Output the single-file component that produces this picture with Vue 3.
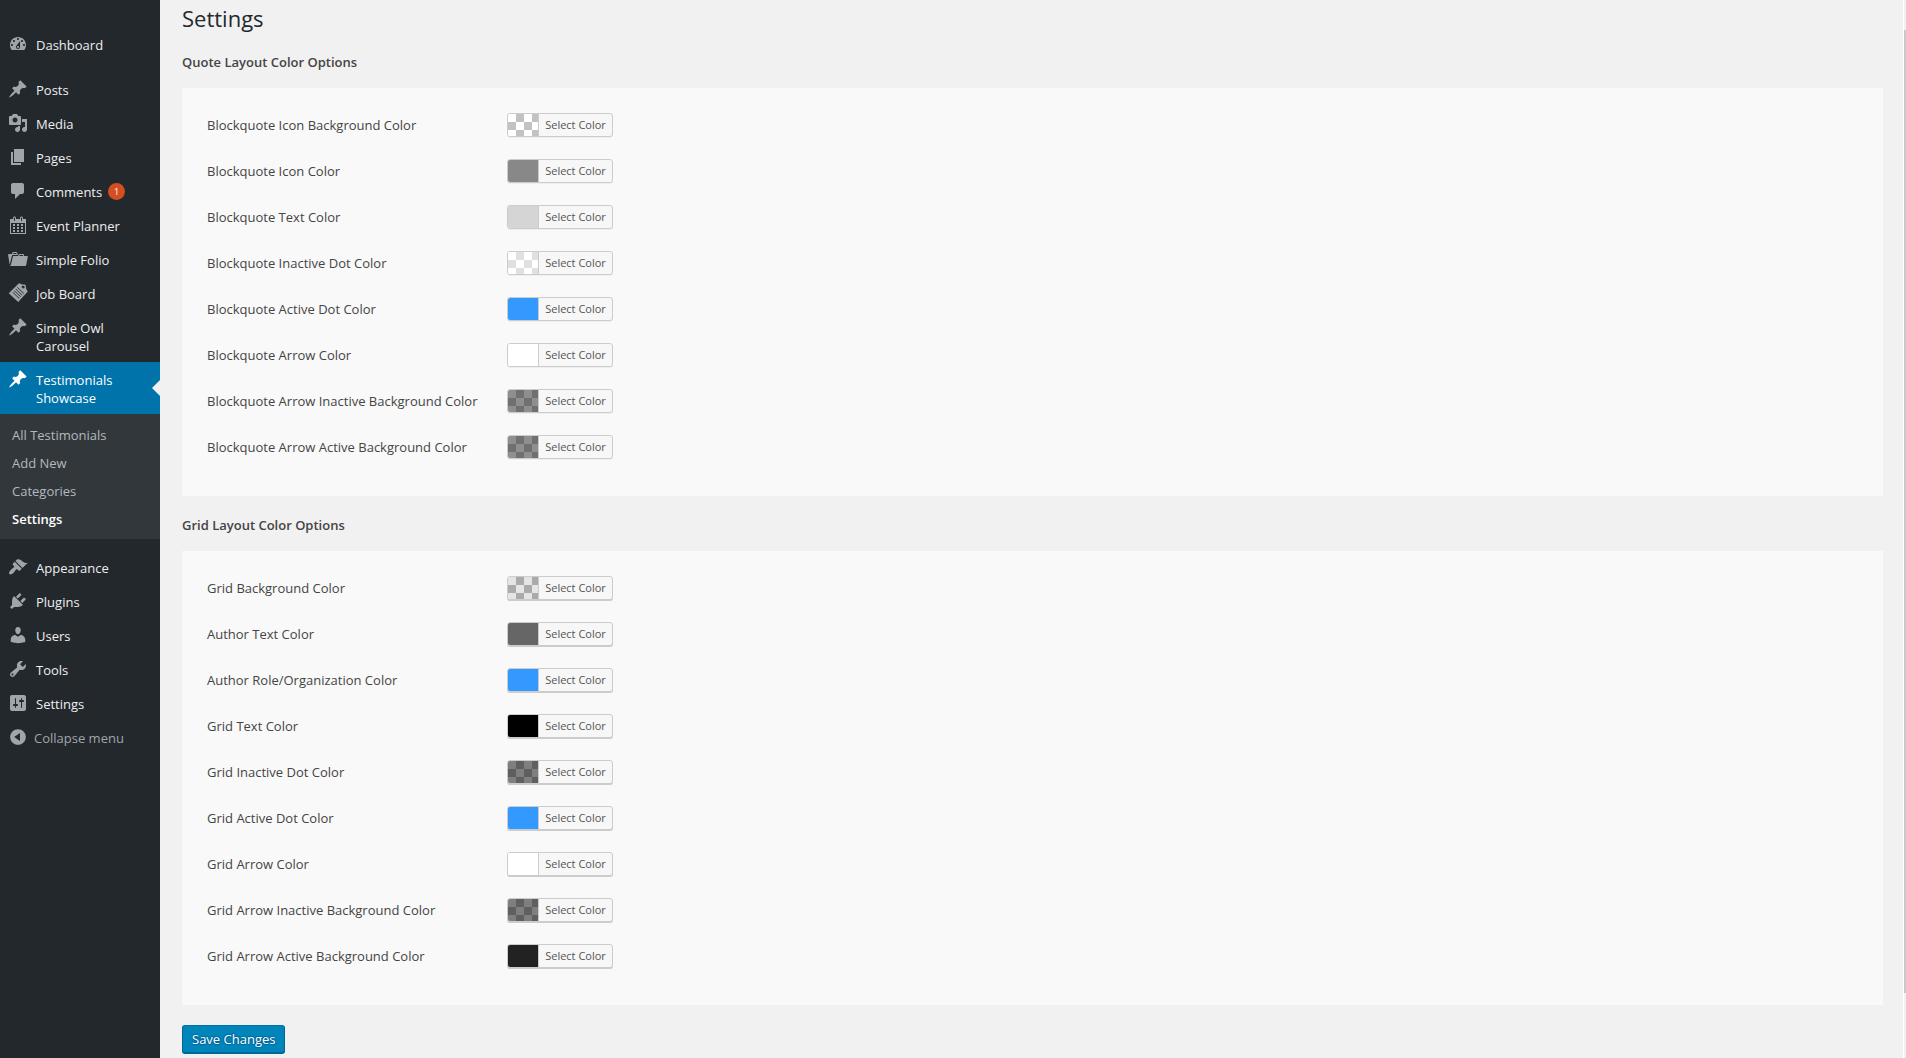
<script setup>
const icons = {
  dashboard: 'M3.76 16h12.48c1.1-1.37 1.76-3.11 1.76-5 0-4.42-3.58-8-8-8s-8 3.58-8 8c0 1.89.66 3.63 1.76 5zM10 4c.55 0 1 .45 1 1s-.45 1-1 1-1-.45-1-1 .45-1 1-1zM6 6c.55 0 1 .45 1 1s-.45 1-1 1-1-.45-1-1 .45-1 1-1zm8 0c.55 0 1 .45 1 1s-.45 1-1 1-1-.45-1-1 .45-1 1-1zm-5.37 5.55L12 7v6c0 1.1-.9 2-2 2s-2-.9-2-2c0-.57.24-1.08.63-1.45zM4 10c.55 0 1 .45 1 1s-.45 1-1 1-1-.45-1-1 .45-1 1-1zm12 0c.55 0 1 .45 1 1s-.45 1-1 1-1-.45-1-1 .45-1 1-1zm-5 3c0-.55-.45-1-1-1s-1 .45-1 1 .45 1 1 1 1-.45 1-1z',
  pin: 'M10.44 3.02l1.82-1.82 6.36 6.35-1.83 1.82c-1.05-.68-2.48-.57-3.41.36l-.75.75c-.92.93-1.04 2.35-.35 3.41l-1.83 1.82-2.41-2.41-2.8 2.79c-.42.42-3.38 2.71-3.8 2.29s1.86-3.39 2.28-3.81l2.79-2.79L4.1 9.36l1.83-1.82c1.05.69 2.48.57 3.4-.36l.75-.75c.93-.92 1.05-2.35.36-3.41z',
  media: 'M13 11V4c0-.55-.45-1-1-1h-1.67L9 1H5L3.67 3H2c-.55 0-1 .45-1 1v7c0 .55.45 1 1 1h10c.55 0 1-.45 1-1zM7 4.5c1.38 0 2.5 1.12 2.5 2.5S8.38 9.5 7 9.5 4.5 8.38 4.5 7 5.62 4.5 7 4.5zM14 6h5v10.5c0 1.38-1.12 2.5-2.5 2.5S14 17.88 14 16.5s1.12-2.5 2.5-2.5c.17 0 .34.02.5.05V9h-3V6zm-4 8.05V13h2v3.5c0 1.38-1.12 2.5-2.5 2.5S7 17.88 7 16.5 8.12 14 9.5 14c.17 0 .34.02.5.05z',
  page: 'M6 15V2h10v13H6zm-1 1h8v2H3V5h2v11z',
  comment: 'M5 2h9c1.1 0 2 .9 2 2v7c0 1.1-.9 2-2 2h-2l-5 5v-5H5c-1.1 0-2-.9-2-2V4c0-1.1.9-2 2-2z',
  calendar: 'M15 4h3v15H2V4h3V3c0-.41.15-.76.44-1.06.29-.29.65-.44 1.06-.44s.77.15 1.06.44c.29.3.44.65.44 1.06v1h4V3c0-.41.15-.76.44-1.06.29-.29.65-.44 1.06-.44s.77.15 1.06.44c.29.3.44.65.44 1.06v1zM6 3v2.5c0 .14.05.26.15.36.09.09.21.14.35.14s.26-.05.35-.14c.1-.1.15-.22.15-.36V3c0-.14-.05-.26-.15-.35-.09-.1-.21-.15-.35-.15s-.26.05-.35.15c-.1.09-.15.21-.15.35zm7 0v2.5c0 .14.05.26.14.36.1.09.22.14.36.14s.26-.05.36-.14c.09-.1.14-.22.14-.36V3c0-.14-.05-.26-.14-.35-.1-.1-.22-.15-.36-.15s-.26.05-.36.15c-.09.09-.14.21-.14.35zm4 15V8H3v10h14zM7 9v2H5V9h2zm2 0h2v2H9V9zm4 2V9h2v2h-2zm-6 1v2H5v-2h2zm2 0h2v2H9v-2zm4 2v-2h2v2h-2zm-6 1v2H5v-2h2zm4 2H9v-2h2v2zm4 0h-2v-2h2v2z',
  folder: 'M4 5H.78c-.37 0-.74.32-.69.84l1.56 9.99S3.5 8.47 3.86 6.7c.11-.53.61-.7.98-.7H10s-.7-2.08-.77-2.31C9.11 3.25 8.89 3 8.45 3H5.14c-.36 0-.7.23-.8.64C4.25 4.04 4 5 4 5zm4.88 0h-4s.42-1 .87-1h2.13c.48 0 1 1 1 1zM2.67 16.25c-.31.47-.76.75-1.26.75h15.73c.54 0 .92-.31 1.03-.83.44-2.19 1.68-8.44 1.68-8.44.07-.5-.3-.73-.62-.73H16V5.53c0-.16-.26-.53-.66-.53h-3.76c-.52 0-.87.58-.87.58L10 7H5.59c-.32 0-.63.19-.69.5 0 0-1.59 6.7-1.72 7.33-.07.37-.22.99-.51 1.42zM15.38 7H11s.58-1 1.13-1h2.29c.71 0 .96 1 .96 1z',
  board: 'M10.4.8L12 .3 13 1.2 17.6 1.8 18.2 6 19.8 8.6 10.2 19 .8 10.2zM14.2 2.8L13.5 4 15.2 5.6 16.6 5 16.3 3.1zM9.4 4.1L9 4.6 15.6 10.8 16 10.3zM7.9 5.8L7.5 6.3 14.1 12.5 14.5 12zM6.4 7.4L6 7.9 12.6 14.1 13 13.6zM4.9 9L4.5 9.5 11.1 15.7 11.5 15.2z',
  brush: 'M14.48 11.06L7.41 3.99l1.5-1.5c.5-.56 2.3-.47 3.51.32 1.21.8 1.43 1.28 2.91 2.1 1.18.64 2.45 1.26 4.45.85zm-.71.71L6.7 4.7 4.93 6.47c-.39.39-.39 1.02 0 1.41l1.06 1.06c.39.39.39 1.03 0 1.42-.6.6-1.43 1.11-2.21 1.69-.35.26-.7.53-1.01.84C1.43 14.23.4 16.08 1.4 17.07c.99 1 2.84-.03 4.18-1.36.31-.31.58-.66.85-1.02.57-.78 1.08-1.61 1.69-2.21.39-.39 1.02-.39 1.41 0l1.06 1.06c.39.39 1.02.39 1.41 0z',
  plug: 'M13.11 4.36L9.87 7.6 8 5.73l3.24-3.24c.35-.34 1.05-.2 1.56.32.52.51.66 1.21.31 1.55zm-8 1.77l.91-1.12 9.01 9.01-1.19.84c-.71.71-2.63 1.16-3.82 1.16H6.14L4.9 17.26c-.59.59-1.54.59-2.12 0-.59-.58-.59-1.53 0-2.12l1.24-1.24v-3.88c0-1.13.4-3.19 1.09-3.89zm7.26 3.97l3.24-3.24c.34-.35 1.04-.21 1.55.31.52.51.66 1.21.31 1.55l-3.24 3.25z',
  user: 'M10 9.25c-2.27 0-2.73-3.44-2.73-3.44C7 4.02 7.82 2 9.97 2c2.16 0 2.98 2.02 2.71 3.81 0 0-.41 3.44-2.68 3.44zm0 2.57L12.72 10c2.39 0 4.52 2.33 4.52 4.53v2.49s-3.65 1.13-7.24 1.13c-3.65 0-7.24-1.13-7.24-1.13v-2.49c0-2.25 1.94-4.48 4.47-4.48z',
  wrench: 'M16.68 9.77c-1.34 1.34-3.3 1.67-4.95.99l-5.41 6.52c-.99.99-2.59.99-3.58 0s-.99-2.59 0-3.57l6.52-5.42c-.68-1.65-.35-3.61.99-4.95 1.28-1.28 3.12-1.62 4.72-1.06l-2.89 2.89 2.82 2.82 2.86-2.87c.53 1.58.18 3.39-1.08 4.65zM3.81 16.21c.4.39 1.04.39 1.43 0 .4-.4.4-1.04 0-1.43-.39-.4-1.03-.4-1.43 0-.39.39-.39 1.03 0 1.43z',
  sliders: 'M18 16V4c0-1.1-.9-2-2-2H4c-1.1 0-2 .9-2 2v12c0 1.1.9 2 2 2h12c1.1 0 2-.9 2-2zM8 11h1c.55 0 1 .45 1 1s-.45 1-1 1H8v1.5c0 .28-.22.5-.5.5s-.5-.22-.5-.5V13H6c-.55 0-1-.45-1-1s.45-1 1-1h1V5.5c0-.28.22-.5.5-.5s.5.22.5.5V11zm5-2h-1c-.55 0-1-.45-1-1s.45-1 1-1h1V5.5c0-.28.22-.5.5-.5s.5.22.5.5V7h1c.55 0 1 .45 1 1s-.45 1-1 1h-1v5.5c0 .28-.22.5-.5.5s-.5-.22-.5-.5V9z',
  collapse: 'M10 2.16c4.33 0 7.84 3.51 7.84 7.84s-3.51 7.84-7.84 7.84S2.16 14.33 2.16 10 5.71 2.16 10 2.16zm2 11.72V6.12L6.18 9.97z',
}

const menu = [
  { label: 'Dashboard', icon: 'dashboard' },
  { label: 'Posts', icon: 'pin', gap: true },
  { label: 'Media', icon: 'media' },
  { label: 'Pages', icon: 'page' },
  { label: 'Comments', icon: 'comment', count: 1 },
  { label: 'Event Planner', icon: 'calendar' },
  { label: 'Simple Folio', icon: 'folder' },
  { label: 'Job Board', icon: 'board' },
  { label: 'Simple Owl Carousel', icon: 'pin' },
  {
    label: 'Testimonials Showcase',
    icon: 'pin',
    children: ['All Testimonials', 'Add New', 'Categories', 'Settings'],
  },
  { label: 'Appearance', icon: 'brush', gap: true },
  { label: 'Plugins', icon: 'plug' },
  { label: 'Users', icon: 'user' },
  { label: 'Tools', icon: 'wrench' },
  { label: 'Settings', icon: 'sliders' },
]

// Each colour is a pair: two different shades show as a checkerboard.
const sections = [
  {
    id: 'quote',
    title: 'Quote Layout Color Options',
    rows: [
      ['Blockquote Icon Background Color', '#ffffff', '#c2c2c2'],
      ['Blockquote Icon Color', '#888888', '#888888'],
      ['Blockquote Text Color', '#d5d5d5', '#d5d5d5'],
      ['Blockquote Inactive Dot Color', '#ffffff', '#e0e0e0'],
      ['Blockquote Active Dot Color', '#3399ff', '#3399ff'],
      ['Blockquote Arrow Color', '#ffffff', '#ffffff'],
      ['Blockquote Arrow Inactive Background Color', '#8f8f8f', '#707070'],
      ['Blockquote Arrow Active Background Color', '#8f8f8f', '#707070'],
    ],
  },
  {
    id: 'grid',
    title: 'Grid Layout Color Options',
    rows: [
      ['Grid Background Color', '#e5e5e5', '#aaaaaa'],
      ['Author Text Color', '#666666', '#666666'],
      ['Author Role/Organization Color', '#3399ff', '#3399ff'],
      ['Grid Text Color', '#000000', '#000000'],
      ['Grid Inactive Dot Color', '#7f7f7f', '#5f5f5f'],
      ['Grid Active Dot Color', '#3399ff', '#3399ff'],
      ['Grid Arrow Color', '#ffffff', '#ffffff'],
      ['Grid Arrow Inactive Background Color', '#7f7f7f', '#5f5f5f'],
      ['Grid Arrow Active Background Color', '#222222', '#222222'],
    ],
  },
]
</script>

<template>
  <div class="admin">
    <nav class="sidebar" aria-label="Main menu">
      <ul class="menu">
        <li v-for="item in menu" :key="item.label" :class="{ gap: item.gap, current: item.children }">
          <a href="#" class="item">
            <svg class="icon" viewBox="0 0 20 20" aria-hidden="true">
              <path :d="icons[item.icon]" fill-rule="evenodd" />
            </svg>
            <span class="name">{{ item.label }}</span>
            <span v-if="item.count" class="count">{{ item.count }}</span>
          </a>
          <ul v-if="item.children" class="submenu">
            <li v-for="child in item.children" :key="child">
              <a href="#" :class="{ active: child === 'Settings' }">{{ child }}</a>
            </li>
          </ul>
        </li>
      </ul>
      <button type="button" class="item collapse">
        <svg class="icon" viewBox="0 0 20 20" aria-hidden="true"><path :d="icons.collapse" fill-rule="evenodd" /></svg>
        <span>Collapse menu</span>
      </button>
    </nav>

    <main class="content">
      <h1>Settings</h1>
      <form @submit.prevent>
        <section v-for="section in sections" :key="section.id" :class="section.id">
          <h3>{{ section.title }}</h3>
          <div class="panel">
            <div v-for="(row, i) in section.rows" :key="row[0]" class="row">
              <label :for="section.id + i">{{ row[0] }}</label>
              <button :id="section.id + i" type="button" class="picker">
                <span class="swatch" :style="{ '--light': row[1], '--dark': row[2] }"></span>
                <span class="caption">Select Color</span>
              </button>
            </div>
          </div>
        </section>
        <button type="submit" class="save">Save Changes</button>
      </form>
    </main>

    <div class="scroll-track" aria-hidden="true"><div class="scroll-thumb"></div></div>
  </div>
</template>

<style>
body {
  margin: 0;
  background: #f1f1f1;
}
</style>

<style scoped>
.admin {
  display: grid;
  grid-template-columns: 160px 1fr 3px;
  min-height: 100vh;
  color: #444;
  font: 13px/18px "Open Sans", "Noto Sans", sans-serif;
}
.admin * {
  box-sizing: border-box;
}
.sidebar {
  padding-top: 27px;
  background: #23282d;
}
ul {
  margin: 0;
  padding: 0;
  list-style: none;
}
.gap {
  margin-top: 11px;
}
.item {
  position: relative;
  display: flex;
  align-items: flex-start;
  padding: 9px 8px 7px;
  color: #eee;
  text-decoration: none;
}
.name {
  max-width: 100px;
}
.icon {
  flex: none;
  width: 20px;
  height: 20px;
  margin: -2px 8px 0 0;
  fill: #a0a5aa;
}
.count {
  width: 17px;
  height: 17px;
  margin-left: 6px;
  border-radius: 50%;
  background: #d54e21;
  color: #fff;
  font-size: 9px;
  line-height: 17px;
  text-align: center;
}
.current .item {
  background: #0073aa;
  color: #fff;
}
.current .icon {
  fill: #fff;
}
.current .item::after {
  content: "";
  position: absolute;
  top: 50%;
  right: 0;
  margin-top: -8px;
  border: 8px solid transparent;
  border-left-width: 0;
  border-right-color: #f1f1f1;
}
.submenu {
  padding: 7px 0 6px;
  background: #32373c;
}
.submenu a {
  display: block;
  padding: 5px 12px;
  color: #b4b9be;
  text-decoration: none;
}
.submenu .active {
  color: #fff;
  font-weight: 600;
}
.collapse {
  width: 100%;
  border: 0;
  background: none;
  color: #a0a5aa;
  font: 13px/18px "Open Sans", "Noto Sans", sans-serif;
}
.collapse .icon {
  margin-right: 6px;
}
.content {
  padding: 0 20px 0 22px;
}
h1 {
  margin: 0;
  padding-top: 3px;
  color: #23282d;
  font-size: 22px;
  font-weight: 400;
  line-height: 30px;
}
h3 {
  margin: 20px 0 17px;
  font-size: 13px;
  font-weight: 600;
  line-height: 18px;
}
.panel {
  padding: 20px 25px;
  background: #f9f9f9;
}
.row {
  display: flex;
  align-items: flex-start;
  padding: 5px 0 17px;
}
.row label {
  width: 300px;
  line-height: 24px;
}
.picker {
  display: flex;
  width: 106px;
  height: 24px;
  padding: 0;
  overflow: hidden;
  border: 1px solid #ccc;
  border-radius: 3px;
  background: #f7f7f7;
  box-shadow: 0 1px 0 #ccc;
  color: #555;
  font: 11px/22px "Open Sans", "Noto Sans", sans-serif;
}
.quote .picker {
  box-shadow: 0 1px 0 #eee;
}
.swatch {
  width: 30px;
  height: 22px;
  background: repeating-conic-gradient(var(--dark) 0 25%, var(--light) 0 50%) 0 0 / 16px 16px;
}
.caption {
  flex: 1;
  border-left: 1px solid #ccc;
  text-align: center;
}
.save {
  height: 28px;
  margin-top: 20px;
  padding: 1px 9px 0;
  border: 1px solid #006799;
  border-top-color: #0073aa;
  border-radius: 3px;
  background: #0085ba;
  box-shadow: 0 1px 0 #006799;
  color: #fff;
  font: 13px/25px "Open Sans", "Noto Sans", sans-serif;
  text-shadow: 0 -1px 1px #006799, 1px 0 1px #006799, 0 1px 1px #006799, -1px 0 1px #006799;
}
.scroll-track {
  padding: 30px 0 65px;
  border-left: 1px solid #fff;
}
.scroll-thumb {
  height: 100%;
  background: #c8c8c8;
}
</style>
